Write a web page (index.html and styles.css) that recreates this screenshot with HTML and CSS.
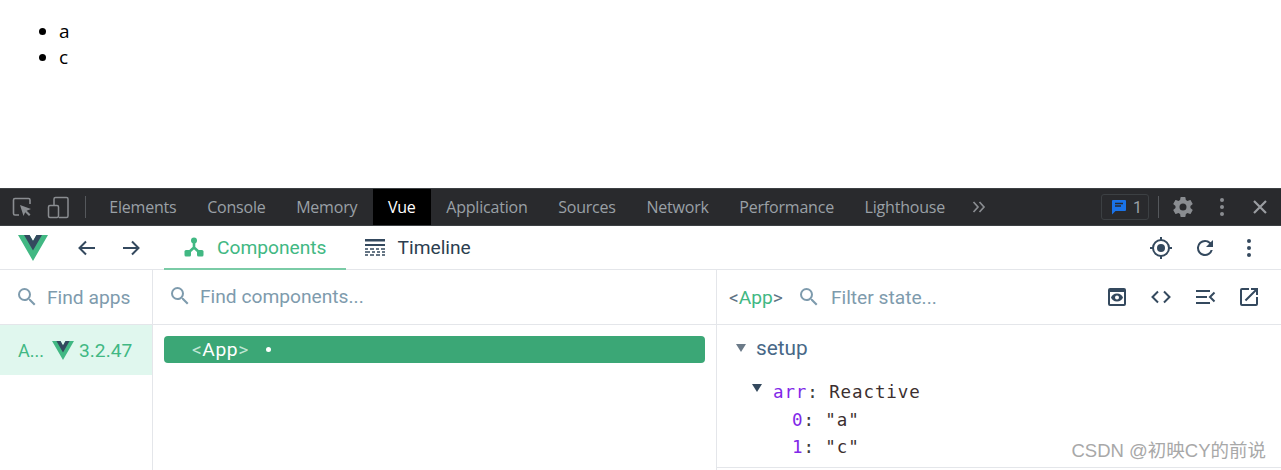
FILE: index.html
```html
<!DOCTYPE html>
<html lang="en">
<head>
<meta charset="utf-8">
<title>Vue devtools</title>
<link rel="stylesheet" href="styles.css">
</head>
<body>
<main class="page">
  <ul class="list">
    <li>a</li>
    <li>c</li>
  </ul>
</main>
<section class="devtools">
  <header class="dt-bar">
    <svg class="dt-tool first" viewBox="0 0 24 24" width="24" height="24"><path d="M9 20H5a1.500 1.500 0 0 1-1.500-1.500V5A1.500 1.500 0 0 1 5 3.500h13.500A1.500 1.500 0 0 1 20 5v4" fill="none" stroke="#8a8d91" stroke-width="1.600"/><path d="M10 10l11 4-4.300 1.700 3.800 3.800-1.500 1.500-3.800-3.800L13.500 21z" fill="#8a8d91"/></svg>
    <svg class="dt-tool" viewBox="0 0 24 24" width="24" height="24"><path d="M8 10V4a1.500 1.500 0 0 1 1.500-1.500h11A1.500 1.500 0 0 1 22 4v17a1.500 1.500 0 0 1-1.500 1.500H13" fill="none" stroke="#8a8d91" stroke-width="1.500"/><rect x="2.500" y="10.500" width="10" height="12" rx="1.500" fill="none" stroke="#8a8d91" stroke-width="1.500"/></svg>
    <span class="dt-sep"></span>
    <nav class="dt-tabs">
      <span class="dt-tab">Elements</span>
      <span class="dt-tab">Console</span>
      <span class="dt-tab">Memory</span>
      <span class="dt-tab active">Vue</span>
      <span class="dt-tab">Application</span>
      <span class="dt-tab">Sources</span>
      <span class="dt-tab">Network</span>
      <span class="dt-tab">Performance</span>
      <span class="dt-tab">Lighthouse</span>
    </nav>
    <svg class="dt-more" viewBox="0 0 14 12" width="14" height="12"><path d="M1.500 1l4.500 5-4.500 5M7.500 1l4.500 5-4.500 5" fill="none" stroke="#8a8d91" stroke-width="1.700"/></svg>
    <div class="dt-right">
      <span class="dt-badge">
        <svg viewBox="0 0 16 16" width="16" height="16"><path d="M2 1h12a1 1 0 0 1 1 1v9a1 1 0 0 1-1 1H4.500L1 15.500V2a1 1 0 0 1 1-1z" fill="#1a73e8"/><path d="M4 4.500h8M4 7h6" stroke="#292a2d" stroke-width="1.300"/></svg>
        <span>1</span>
      </span>
      <span class="dt-sep narrow"></span>
      <svg class="gear" viewBox="0 0 24 24" width="24" height="24"><path fill="#8a8d91" d="M19.400 13c.04-.33.06-.66.060-1s-.02-.67-.06-1l2.100-1.650c.2-.15.25-.42.120-.64l-2-3.460c-.12-.22-.39-.3-.61-.22l-2.490 1c-.52-.4-1.080-.73-1.690-.98l-.38-2.650A.49.49 0 0 0 13.970 2h-4a.49.49 0 0 0-.49.420l-.38 2.650c-.61.250-1.170.59-1.690.98l-2.490-1c-.23-.09-.49 0-.61.220l-2 3.460c-.13.220-.07.490.12.640L4.540 11c-.04.33-.07.670-.07 1s.03.670.07 1l-2.110 1.650c-.19.150-.25.420-.12.640l2 3.460c.12.220.39.300.61.220l2.490-1c.52.400 1.080.730 1.690.980l.38 2.650c.03.240.240.420.49.420h4c.25 0 .460-.180.490-.420l.38-2.650c.610-.250 1.170-.590 1.690-.980l2.490 1c.230.090.490 0 .610-.220l2-3.460c.120-.220.070-.490-.120-.640zM12 15.500a3.500 3.500 0 1 1 0-7 3.500 3.500 0 0 1 0 7z"/></svg>
      <svg class="dots" viewBox="0 0 6 20" width="6" height="20"><circle cx="3" cy="3" r="2" fill="#8a8d91"/><circle cx="3" cy="10" r="2" fill="#8a8d91"/><circle cx="3" cy="17" r="2" fill="#8a8d91"/></svg>
      <svg class="close" viewBox="0 0 14 14" width="14" height="14"><path d="M1 1l12 12M13 1L1 13" stroke="#9a9da1" stroke-width="2.200"/></svg>
    </div>
  </header>

  <header class="vue-bar">
    <svg class="logo" viewBox="0 0 261.760 226.690" width="30" height="26"><path d="M161.096.001l-30.225 52.351L100.647.001H-.005l130.877 226.688L261.749.001z" fill="#41b883"/><path d="M161.096.001l-30.225 52.351L100.647.001H52.346l78.526 136.010L209.398.001z" fill="#34495e"/></svg>
    <svg class="nav-arrow" viewBox="0 0 24 24" width="24" height="24"><path d="M20 12H5M11 5.500L4.500 12l6.500 6.500" fill="none" stroke="#34495e" stroke-width="2"/></svg>
    <svg class="nav-arrow fwd" viewBox="0 0 24 24" width="24" height="24"><path d="M4 12h15M13 5.500l6.500 6.500-6.500 6.500" fill="none" stroke="#34495e" stroke-width="2"/></svg>
    <div class="vue-tab current">
      <svg viewBox="0 0 20 20" width="20" height="20"><circle cx="10" cy="3.500" r="3" fill="#41b883"/><rect x=".5" y="13" width="6.500" height="6.500" rx="1.500" fill="#41b883"/><rect x="13" y="13" width="6.500" height="6.500" rx="1.500" fill="#41b883"/><path d="M10 4v7M10 10.500l-6 5.500M10 10.500l6 5.500" stroke="#41b883" stroke-width="2.600" fill="none"/></svg>
      <span>Components</span>
    </div>
    <div class="vue-tab">
      <svg viewBox="0 0 20 18" width="20" height="18"><path d="M0 1h20v2.500H0zM0 6h20v2H0z" fill="#34495e"/><path d="M0 11h3M5 11h4M11 11h3M16 11h4M0 14h5M7 14h3M12 14h3M17 14h3M0 17h3M5 17h4M11 17h4M17 17h3" stroke="#34495e" stroke-width="1.500"/></svg>
      <span>Timeline</span>
    </div>
    <div class="vue-actions">
      <svg viewBox="0 0 24 24" width="24" height="24"><circle cx="12" cy="12" r="8" fill="none" stroke="#34495e" stroke-width="2"/><circle cx="12" cy="12" r="4" fill="#34495e"/><path d="M12 1v4M12 19v4M1 12h4M19 12h4" stroke="#34495e" stroke-width="2"/></svg>
      <svg viewBox="0 0 24 24" width="24" height="24"><path fill="#34495e" d="M17.650 6.350A7.958 7.958 0 0 0 12 4a8 8 0 1 0 7.730 10h-2.080A6 6 0 1 1 12 6c1.660 0 3.140.690 4.220 1.780L13 11h7V4z"/></svg>
      <svg viewBox="0 0 24 24" width="24" height="24"><circle cx="12" cy="5" r="2" fill="#34495e"/><circle cx="12" cy="12" r="2" fill="#34495e"/><circle cx="12" cy="19" r="2" fill="#34495e"/></svg>
    </div>
  </header>

  <div class="panes">
    <aside class="pane apps">
      <div class="search">
        <svg class="lens" viewBox="0 0 24 24" width="24" height="24"><path fill="#7e9bad" d="M15.500 14h-.79l-.28-.27A6.470 6.470 0 0 0 16 9.500 6.500 6.500 0 1 0 9.500 16c1.610 0 3.090-.59 4.230-1.570l.27.280v.79l5 4.990L20.490 19zm-6 0a4.500 4.500 0 1 1 0-9 4.500 4.500 0 0 1 0 9z"/></svg>
        <span class="ph">Find apps</span>
      </div>
      <div class="app-row">
        <span class="app-name">A...</span>
        <svg viewBox="0 0 261.760 226.690" width="22" height="19"><path d="M161.096.001l-30.225 52.351L100.647.001H-.005l130.877 226.688L261.749.001z" fill="#41b883"/><path d="M161.096.001l-30.225 52.351L100.647.001H52.346l78.526 136.010L209.398.001z" fill="#34495e"/></svg>
        <span class="app-ver">3.2.47</span>
      </div>
    </aside>
    <section class="pane tree">
      <div class="search tree-search">
        <svg class="lens" viewBox="0 0 24 24" width="24" height="24"><path fill="#7e9bad" d="M15.500 14h-.79l-.28-.27A6.470 6.470 0 0 0 16 9.500 6.500 6.500 0 1 0 9.500 16c1.610 0 3.090-.59 4.230-1.570l.27.280v.79l5 4.990L20.490 19zm-6 0a4.500 4.500 0 1 1 0-9 4.500 4.500 0 0 1 0 9z"/></svg>
        <span class="ph">Find components...</span>
      </div>
      <div class="tree-body">
        <div class="node"><span class="br">&lt;</span>App<span class="br">&gt;</span><i class="dot"></i></div>
      </div>
    </section>
    <section class="pane state">
      <div class="search state-search">
        <span class="comp"><span class="br2">&lt;</span>App<span class="br2">&gt;</span></span>
        <svg class="lens" viewBox="0 0 24 24" width="24" height="24"><path fill="#7e9bad" d="M15.500 14h-.79l-.28-.27A6.470 6.470 0 0 0 16 9.500 6.500 6.500 0 1 0 9.500 16c1.610 0 3.090-.59 4.230-1.570l.27.280v.79l5 4.990L20.490 19zm-6 0a4.500 4.500 0 1 1 0-9 4.500 4.500 0 0 1 0 9z"/></svg>
        <span class="ph">Filter state...</span>
        <div class="state-actions">
          <svg viewBox="0 0 24 24" width="24" height="24"><path fill="#34495e" fill-rule="evenodd" d="M5 3h14a2 2 0 0 1 2 2v14a2 2 0 0 1-2 2H5a2 2 0 0 1-2-2V5a2 2 0 0 1 2-2zm0 4v12h14V7z"/><path fill="#34495e" fill-rule="evenodd" d="M12 8.500c3 0 5.300 1.800 6 4-.7 2.200-3 4-6 4s-5.300-1.800-6-4c.7-2.200 3-4 6-4zm0 2a2 2 0 1 0 0 4 2 2 0 0 0 0-4z"/></svg>
          <svg viewBox="0 0 24 24" width="24" height="24"><path d="M9 6.500L3.500 12 9 17.500M15 6.500l5.500 5.500-5.500 5.500" fill="none" stroke="#34495e" stroke-width="2"/></svg>
          <svg viewBox="0 0 24 24" width="24" height="24"><path d="M3 6h14M3 12h11M3 18h14M21.500 7.500L17 12l4.500 4.500" fill="none" stroke="#34495e" stroke-width="2"/></svg>
          <svg viewBox="0 0 24 24" width="24" height="24"><path fill="#34495e" d="M19 19H5V5h7V3H5a2 2 0 0 0-2 2v14a2 2 0 0 0 2 2h14a2 2 0 0 0 2-2v-7h-2zM14 3v2h3.590l-9.830 9.830 1.410 1.410L19 6.410V10h2V3z"/></svg>
        </div>
      </div>
      <div class="state-body">
        <div class="group"><i class="tri grey"></i><span>setup</span></div>
        <div class="prop top"><i class="tri dark"></i><span class="key">arr</span>: <span class="val">Reactive</span></div>
        <div class="prop sub"><span class="key">0</span>: <span class="val">"a"</span></div>
        <div class="prop sub"><span class="key">1</span>: <span class="val">"c"</span></div>
      </div>
    </section>
  </div>
  <span class="watermark">CSDN @初映CY的前说</span>
</section>
</body>
</html>
```

FILE: styles.css
```css
* { box-sizing: border-box; }
html, body { margin: 0; padding: 0; }
body {
  width: 1281px;
  height: 470px;
  overflow: hidden;
  background: #fff;
  font-family: "Roboto", "Noto Sans CJK SC", sans-serif;
}
svg { display: block; flex: none; }

.page { height: 188px; padding-top: 18px; }
.list {
  margin: 0;
  padding-left: 59px;
  font-family: "Open Sans", sans-serif;
  font-size: 19px;
  line-height: 26px;
  color: #000;
}

.devtools { position: relative; height: 282px; overflow: hidden; }

.dt-bar {
  display: flex;
  align-items: center;
  height: 38px;
  background: #292a2d;
  border-top: 1px solid #3c4043;
  border-bottom: 1px solid #3c4043;
  color: #9aa0a6;
}
.dt-tool { margin-left: 12px; }
.dt-tool.first { margin-left: 10px; }
.dt-sep { width: 1px; height: 22px; background: #55585c; margin-left: 15px; }
.dt-sep.narrow { margin-left: 9px; height: 22px; }
.dt-tabs { display: flex; align-self: stretch; margin-left: 8px; }
.dt-tab {
  display: flex;
  align-items: center;
  padding: 0 15.300px;
  font-family: "Open Sans", sans-serif;
  font-size: 16px;
  letter-spacing: -.2px;
  color: #9aa0a6;
}
.dt-tab.active { background: #000; color: #fff; }
.dt-more { margin-left: 12px; }
.dt-right { display: flex; align-items: center; margin-left: auto; }
.dt-badge {
  display: flex;
  align-items: center;
  gap: 6px;
  width: 48px;
  height: 26px;
  padding-left: 9px;
  border: 1px solid #3c4043;
  border-radius: 3px;
  font-size: 16px;
  color: #9aa0a6;
}
.gear { margin-left: 12px; }
.dots { margin-left: 24px; }
.close { margin: 0 14px 0 28px; }

.vue-bar {
  display: flex;
  align-items: center;
  height: 44px;
  border-bottom: 1px solid #e4e6ea;
}
.logo { margin-left: 18px; }
.nav-arrow { margin-left: 27px; }
.nav-arrow.fwd { margin-left: 20px; }
.vue-tab {
  display: flex;
  align-items: center;
  gap: 13px;
  align-self: stretch;
  padding: 0 19px 2px;
  font-size: 19.200px;
  color: #2c3e50;
  margin-bottom: -1px;
}
.vue-tab.current {
  margin-left: 21px;
  padding: 0 19px 0 20px;
  color: #41b883;
  border-bottom: 2px solid #7acba6;
}
.vue-actions { display: flex; align-items: center; gap: 20px; margin-left: auto; margin-right: 20px; }

.panes { display: flex; height: 200px; }
.pane { border-right: 1px solid #e4e6ea; }
.apps { width: 153px; }
.tree { width: 564px; }
.state { flex: 1; border-right: 0; }

.search {
  display: flex;
  align-items: center;
  height: 55px;
  border-bottom: 1px solid #e4e6ea;
  padding-left: 15px;
  gap: 8px;
  font-size: 19.200px;
  color: #7e9bad;
}
.search.tree-search { padding-bottom: 2px; }
.lens { width: 24px; height: 24px; }

.app-row {
  display: flex;
  align-items: center;
  height: 50px;
  padding-left: 18px;
  background: #e0f7ee;
  color: #41b883;
  font-size: 19.200px;
}
.app-name { width: 34px; font-size: 18px; }
.app-ver { margin-left: 5px; }

.tree-body { padding: 11px 11px 0; }
.node {
  display: flex;
  align-items: center;
  height: 27px;
  padding-left: 28px;
  background: #3ba776;
  border-radius: 4px;
  color: #fff;
  font-family: "Roboto", sans-serif;
  font-size: 19.200px;
  letter-spacing: .6px;
}
.br { color: #bfe5d3; }
.dot { width: 5px; height: 5px; border-radius: 50%; background: #fff; margin-left: 17px; }

.state-search { padding-left: 12px; gap: 10px; }
.comp { color: #41b883; margin-right: 4px; }
.br2 { color: #5f7385; }
.state-actions { display: flex; gap: 20px; margin-left: auto; margin-right: 20px; }

.state-body { padding-top: 10px; border-bottom: 1px solid #e4e6ea; height: 143px; }
.group {
  display: flex;
  align-items: center;
  gap: 10px;
  height: 26px;
  padding-left: 19px;
  font-size: 20.800px;
  color: #486887;
}
.tri { display: block; width: 0; height: 0; border-left: 5.500px solid transparent; border-right: 5.500px solid transparent; }
.tri.grey { border-top: 8px solid #6b7a88; }
.tri.dark { border-top: 8px solid #34495e; position: absolute; left: 752px; margin-top: 5px; }
.prop {
  font-family: "DejaVu Sans Mono", monospace;
  font-size: 17.500px;
  letter-spacing: .9px;
  line-height: 27px;
  color: #3c3c3c;
  height: 27.500px;
  white-space: pre;
}
.prop.top { padding-left: 56px; margin-top: 18px; }
.prop.sub { padding-left: 75px; }
.key { color: #8128e8; }
.val { color: #3c2f2f; margin-left: -1px; }

.watermark {
  position: absolute;
  right: 15px;
  bottom: 8px;
  font-family: "Liberation Sans", "Noto Sans CJK SC", sans-serif;
  font-size: 18.500px;
  color: #a8a8a8;
}
```
